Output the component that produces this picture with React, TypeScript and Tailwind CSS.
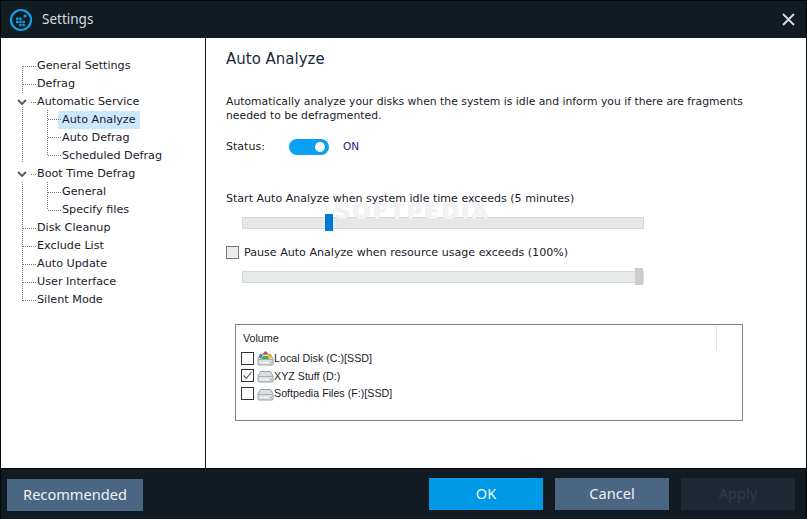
import React from "react";

const font = { fontFamily: '"DejaVu Sans", Verdana, sans-serif' };
const narrow = { fontFamily: '"Noto Sans", sans-serif' };
const volFont = { fontFamily: '"Liberation Sans", sans-serif' };

function Tree() {
  const rows: [string, number, boolean?][] = [
    ["General Settings", 0],
    ["Defrag", 0],
    ["Automatic Service", 0],
    ["Auto Analyze", 1, true],
    ["Auto Defrag", 1],
    ["Scheduled Defrag", 1],
    ["Boot Time Defrag", 0],
    ["General", 1],
    ["Specify files", 1],
    ["Disk Cleanup", 0],
    ["Exclude List", 0],
    ["Auto Update", 0],
    ["User Interface", 0],
    ["Silent Mode", 0],
  ];
  return (
    <div className="relative pt-[19px]">
      <svg className="absolute left-0 top-0" width="62" height="270" fill="none">
        <g stroke="#777" strokeDasharray="1 1">
          <path d="M21.5 28V55M21.5 69V125M21.5 144V263M22 28.5H35M22 46.5H35M30 64.5H35M30 136.5H35M22 190.5H35M22 208.5H35M22 226.5H35M22 244.5H35M22 262.5H35" />
          <path d="M46.5 72V118M47 81.5H60M47 99.5H60M47 117.5H60M46.5 144V172M47 154.5H60M47 172.5H60" />
        </g>
        <path d="M17 62l4 4 4-4M17 134l4 4 4-4" stroke="#555" strokeWidth="1.8" />
      </svg>
      {rows.map(([t, lvl, sel]) => (
        <div key={t} className={`h-[18px] leading-[18px] text-[11.2px] text-[#1a1a2a] whitespace-nowrap ${lvl ? "pl-[60px]" : "pl-[35px]"}`}>
          <span className={`inline-block h-[18px] pl-[4px] pr-[4px] -ml-[3px] ${sel ? "bg-[#cce8ff]" : ""}`}>{t}</span>
        </div>
      ))}
    </div>
  );
}

function Slider({ thumb, on }: { thumb: number; on?: boolean }) {
  return (
    <div className="relative ml-[16px] w-[402px] h-[12px] bg-[#e6e9e9] border border-[#d6d8d8]">
      <div
        className={`absolute top-[-4px] w-[8px] h-[17px] ${on ? "bg-[#0078d7]" : "bg-[#cccccc]"}`}
        style={{ left: thumb }}
      />
    </div>
  );
}

function Drive({ sys }: { sys?: boolean }) {
  return (
    <svg width="17" height="15" viewBox="0 0 17 15" className="shrink-0">
      <path d="M3.5 3.5h10l2.5 4.5v5a1 1 0 0 1-1 1H2a1 1 0 0 1-1-1V8z" fill="#dcdfe2" stroke="#9a9ea3" />
      <path d="M1.5 8.5h14" stroke="#a9adb1" />
      <path d="M3 11.5h11" stroke="#f6f6f6" />
      <rect x="13" y="11" width="1.5" height="1.2" fill="#6fc04f" />
      {sys && (
        <g>
          <path d="M8.5 0l3 3h-6z" fill="#d9472b" />
          <path d="M3 2.5l3 2.2-1.8 3-2.7-1.5z" fill="#3f8fd2" />
          <path d="M14 2.5l-3 2.2 1.8 3 2.7-1.5z" fill="#e8b92e" />
          <path d="M6 5h5l1 3H5z" fill="#5aa63c" />
        </g>
      )}
    </svg>
  );
}

function Vol({ label, checked, sys }: { label: string; checked?: boolean; sys?: boolean }) {
  return (
    <div className="flex items-center h-[17.5px] text-[10.7px] text-[#1a1a2a]" style={volFont}>
      <span className="w-[13px] h-[13px] border border-[#333] bg-white flex items-center justify-center mr-[3px] shrink-0">
        {checked && (
          <svg width="11" height="11" viewBox="0 0 11 11" fill="none">
            <path d="M1.5 5.5l2.8 3L9.5 2" stroke="#555" strokeWidth="1.1" />
          </svg>
        )}
      </span>
      <Drive sys={sys} />
      <span className="whitespace-nowrap">{label}</span>
    </div>
  );
}

export default function App() {
  return (
    <div className="w-[807px] h-[519px] flex flex-col bg-[#121a22] overflow-hidden border-x border-t border-[#05080b]" style={font}>
      <header className="h-[37px] shrink-0 flex items-center pl-[8px] pr-[11px] bg-[#121a22]">
        <svg width="24" height="24" viewBox="0 0 24 24" fill="none" className="shrink-0">
          <circle cx="12" cy="12" r="10" stroke="#12a0e8" strokeWidth="2.2" />
          <g fill="#12a0e8">
            <rect x="7" y="9.5" width="2.4" height="2.4" />
            <rect x="10.2" y="9.5" width="2.4" height="2.4" />
            <rect x="7" y="12.7" width="2.4" height="2.4" />
            <rect x="10.2" y="12.7" width="2.4" height="2.4" />
            <rect x="13.4" y="12.7" width="2.4" height="2.4" />
            <rect x="10.2" y="15.9" width="2.4" height="2.4" />
            <rect x="13.4" y="15.9" width="2.4" height="2.4" />
            <circle cx="16" cy="8" r="1.6" />
          </g>
        </svg>
        <span className="ml-[9px] text-[13.5px] text-[#d8dde2]" style={narrow}>Settings</span>
        <svg width="13" height="13" viewBox="0 0 13 13" className="ml-auto" fill="none">
          <path d="M1 1l11 11M12 1L1 12" stroke="#d8dde2" strokeWidth="1.8" />
        </svg>
      </header>

      <div className="flex-1 flex bg-white min-h-0">
        <aside className="w-[204px] shrink-0 border-r border-[#121a22] box-content">
          <Tree />
        </aside>
        <main className="relative flex-1 pl-[20px] text-[11.05px] text-[#1a1a2a]">
          <h1 className="mt-[10px] text-[15px] leading-[22px] text-[#1a2a3a]">Auto Analyze</h1>
          <p className="mt-[25px] text-[10.8px] leading-[14px] w-[530px]">
            Automatically analyze your disks when the system is idle and inform you if there are fragments needed to be defragmented.
          </p>
          <div className="mt-[15px] flex items-center h-[18px]">
            <span className="w-[63px]">Status:</span>
            <span className="w-[40px] h-[16px] rounded-full bg-[#0aa0f5] relative">
              <span className="absolute right-[4px] top-[3px] w-[10px] h-[10px] rounded-full bg-white" />
            </span>
            <span className="ml-[14px] text-[10.5px] text-[#22227a]">ON</span>
          </div>
          <div className="mt-[34px] leading-[18px] h-[18px] whitespace-nowrap">Start Auto Analyze when system idle time exceeds (5 minutes)</div>
          <div className="mt-[9px]">
            <Slider thumb={82} on />
          </div>
          <div className="mt-[14px] flex items-center h-[18px]">
            <span className="w-[13px] h-[13px] border border-[#777] bg-[#ececec] mr-[5px]" />
            <span className="whitespace-nowrap pt-[2px] text-[11.1px]">Pause Auto Analyze when resource usage exceeds (100%)</span>
          </div>
          <div className="mt-[10px]">
            <Slider thumb={392} />
          </div>
          <div className="relative mt-[41px] ml-[9px] w-[508px] h-[97px] border border-[#7f878c] pl-[5px] pt-[5px]">
            <div className="text-[10.7px] leading-[16px] h-[19.5px] pl-[2px]" style={volFont}>Volume</div>
            <div className="absolute right-[25px] top-[1px] h-[24px] w-px bg-[#e4e4e4]" />
            <Vol label="Local Disk (C:)[SSD]" sys />
            <Vol label="XYZ Stuff (D:)" checked />
            <Vol label="Softpedia Files (F:)[SSD]" />
          </div>
          <div className="absolute left-[129px] top-[162px] leading-[24px] text-[21px] font-bold tracking-[2.5px] text-white/75 pointer-events-none select-none [text-shadow:0_0_1px_#d0d0d0]">SOFTPEDIA</div>
        </main>
      </div>

      <footer className="h-[51px] shrink-0 flex items-start border-t border-[#05080b] text-[14.6px] pt-[9px] pb-0" style={narrow}>
        <button className="ml-[6px] mt-[1px] w-[136px] h-[32px] bg-[#4b6682] text-[#eef2f5]">Recommended</button>
        <button className="ml-auto w-[114px] h-[32px] bg-[#0099e5] text-[#eef6fb]">OK</button>
        <button className="ml-[12px] w-[114px] h-[32px] bg-[#4b6682] text-[#eef2f5]">Cancel</button>
        <button className="ml-[12px] mr-[11px] w-[114px] h-[32px] bg-[#1f2933] text-[#2f3c49]">Apply</button>
      </footer>
    </div>
  );
}
